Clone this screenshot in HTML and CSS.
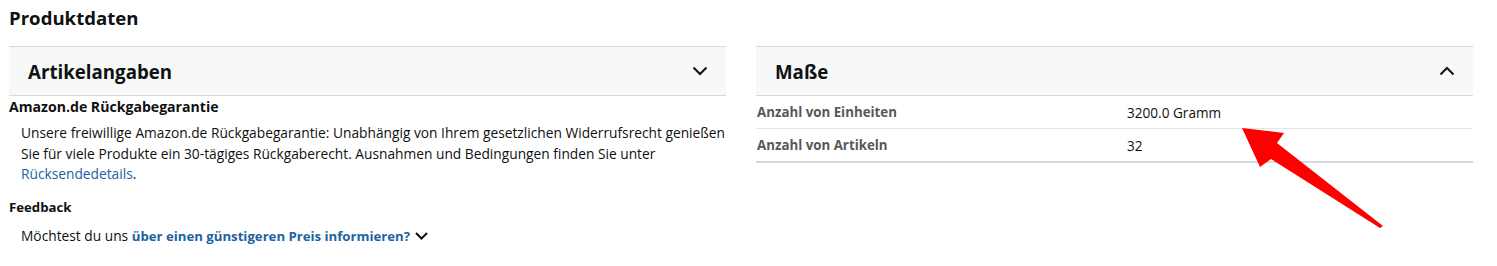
FILE: index.html
```html
<!DOCTYPE html>
<html lang="de">
<head>
<meta charset="utf-8">
<title>Produktdaten</title>
<link rel="stylesheet" href="styles.css">
</head>
<body>
<h2 class="page-title">Produktdaten</h2>
<div class="columns">
  <section class="col">
    <div class="acc-head">
      <span class="acc-title">Artikelangaben</span>
      <svg class="chev" width="16" height="10" viewBox="0 0 16 10"><path d="M1.5 1.5 L8 8 L14.5 1.5" fill="none" stroke="#0f1111" stroke-width="2"/></svg>
    </div>
    <h4 class="sub sub-wide">Amazon.de Rückgabegarantie</h4>
    <p class="para">Unsere freiwillige Amazon.de Rückgabegarantie: Unabhängig von Ihrem gesetzlichen Widerrufsrecht genießen Sie für viele Produkte ein 30-tägiges Rückgaberecht. Ausnahmen und Bedingungen finden Sie unter <a class="link" href="#">Rücksendedetails</a>.</p>
    <h4 class="sub">Feedback</h4>
    <p class="para para-fb">Möchtest du uns <a class="link bold" href="#">über einen günstigeren Preis informieren?</a> <svg class="chev-sm" width="13" height="8" viewBox="0 0 13 8"><path d="M1 1 L6.5 6.5 L12 1" fill="none" stroke="#0f1111" stroke-width="2"/></svg></p>
  </section>
  <section class="col">
    <div class="acc-head">
      <span class="acc-title">Maße</span>
      <svg class="chev" width="16" height="10" viewBox="0 0 16 10"><path d="M1.5 8.5 L8 2 L14.5 8.5" fill="none" stroke="#0f1111" stroke-width="2"/></svg>
    </div>
    <table class="specs">
      <tr><th>Anzahl von Einheiten</th><td>3200.0 Gramm</td></tr>
      <tr class="last"><th>Anzahl von Artikeln</th><td>32</td></tr>
    </table>
  </section>
</div>
<svg class="arrow" width="160" height="110" viewBox="1235 122 160 110"><polygon points="1242,128 1284,133 1277,143 1383,226 1380,228 1271,159 1260,167" fill="#ff0000"/></svg>
</body>
</html>
```
FILE: styles.css
```css
html, body { margin: 0; padding: 0; background: #fff; }
body {
  font-family: "Open Sans", "Noto Sans", sans-serif;
  color: #0f1111;
  padding: 0 24px 0 9px;
  position: relative;
}
.page-title {
  margin: 0;
  padding-top: 6px;
  font-size: 18.6px;
  line-height: 24px;
  font-weight: 700;
  height: 40px;
}
.columns {
  display: grid;
  grid-template-columns: 1fr 1fr;
  column-gap: 30px;
}
.acc-head {
  display: flex;
  align-items: center;
  justify-content: space-between;
  height: 48px;
  background: #f7f8f8;
  border-top: 1px solid #d5d9d9;
  border-bottom: 1px solid #d5d9d9;
  padding: 0 18px 0 19px;
}
.acc-title { font-size: 18.7px; font-weight: 700; }
.chev { display: block; }
.sub {
  margin: 0;
  font-size: 13.2px;
  font-weight: 700;
  line-height: 20px;
  padding-top: 1px;
}
.sub-wide { font-size: 14.1px; }
.para {
  margin: 6px -10px 11px 12px;
  font-size: 13.75px;
  line-height: 20.5px;
}
.para-fb { margin-top: 9px; }
.link { color: #2162a1; text-decoration: none; }
.link.bold { font-weight: 700; font-size: 13.2px; }
.chev-sm { vertical-align: 1px; margin-left: 1px; }
.specs {
  width: 100%;
  border-collapse: collapse;
  font-size: 13.6px;
}
.specs th, .specs td {
  text-align: left;
  padding: 0 1px;
  height: 32px;
  border-bottom: 1px solid #e3e6e6;
}
.specs th { width: 368px; color: #565959; font-weight: 700; font-size: 13.3px; }
.specs tr.last th, .specs tr.last td { border-bottom: 2px solid #d5d9d9; }
.arrow { position: absolute; left: 1235px; top: 122px; }
```
